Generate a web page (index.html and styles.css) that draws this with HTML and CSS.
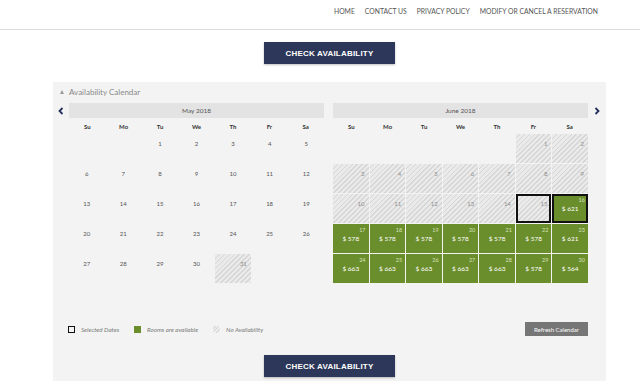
FILE: index.html
```html
<!DOCTYPE html>
<html lang="en">

<head>
    <meta charset="UTF-8">
    <meta name="viewport" content="width=device-width, initial-scale=1.0">
    <title>Availability</title>
    <link rel="stylesheet" href="styles.css">
</head>

<body>
    <header class="topbar">
        <nav class="menu">
            <a href="#">HOME</a>
            <a href="#">CONTACT US</a>
            <a href="#">PRIVACY POLICY</a>
            <a href="#">MODIFY OR CANCEL A RESERVATION</a>
        </nav>
    </header>

    <main class="page">
        <div class="cta cta-top">
            <button class="btn-check">CHECK AVAILABILITY</button>
        </div>

        <section class="calendarBox">
            <h3 class="calTitle"><span class="calIcon"></span>Availability Calendar</h3>

            <div class="months">
                <a href="#" class="arrow">
                    <svg width="6" height="8" viewBox="0 0 6 8"><path d="M4.5 1 L1.5 4 L4.5 7" fill="none" stroke="#25305a" stroke-width="1.8"/></svg>
                </a>

                <div class="month">
                    <div class="monthName">May 2018</div>
                    <div class="dow"><span>Su</span><span>Mo</span><span>Tu</span><span>We</span><span>Th</span><span>Fr</span><span>Sa</span></div>
                    <div class="days">
                        <div class="day"></div>
                        <div class="day"></div>
                        <div class="day">1</div>
                        <div class="day">2</div>
                        <div class="day">3</div>
                        <div class="day">4</div>
                        <div class="day">5</div>
                        <div class="day">6</div>
                        <div class="day">7</div>
                        <div class="day">8</div>
                        <div class="day">9</div>
                        <div class="day">10</div>
                        <div class="day">11</div>
                        <div class="day">12</div>
                        <div class="day">13</div>
                        <div class="day">14</div>
                        <div class="day">15</div>
                        <div class="day">16</div>
                        <div class="day">17</div>
                        <div class="day">18</div>
                        <div class="day">19</div>
                        <div class="day">20</div>
                        <div class="day">21</div>
                        <div class="day">22</div>
                        <div class="day">23</div>
                        <div class="day">24</div>
                        <div class="day">25</div>
                        <div class="day">26</div>
                        <div class="day">27</div>
                        <div class="day">28</div>
                        <div class="day">29</div>
                        <div class="day">30</div>
                        <div class="day full"><span class="num">31</span></div>
                    </div>
                </div>

                <div class="month">
                    <div class="monthName">June 2018</div>
                    <div class="dow"><span>Su</span><span>Mo</span><span>Tu</span><span>We</span><span>Th</span><span>Fr</span><span>Sa</span></div>
                    <div class="days">
                        <div class="day"></div>
                        <div class="day"></div>
                        <div class="day"></div>
                        <div class="day"></div>
                        <div class="day"></div>
                        <div class="day full"><span class="num">1</span></div>
                        <div class="day full"><span class="num">2</span></div>
                        <div class="day full"><span class="num">3</span></div>
                        <div class="day full"><span class="num">4</span></div>
                        <div class="day full"><span class="num">5</span></div>
                        <div class="day full"><span class="num">6</span></div>
                        <div class="day full"><span class="num">7</span></div>
                        <div class="day full"><span class="num">8</span></div>
                        <div class="day full"><span class="num">9</span></div>
                        <div class="day full"><span class="num">10</span></div>
                        <div class="day full"><span class="num">11</span></div>
                        <div class="day full"><span class="num">12</span></div>
                        <div class="day full"><span class="num">13</span></div>
                        <div class="day full"><span class="num">14</span></div>
                        <div class="day full selected"><span class="num">15</span></div>
                        <div class="day open selected"><span class="num">16</span><span class="price">$ 621</span></div>
                        <div class="day open"><span class="num">17</span><span class="price">$ 578</span></div>
                        <div class="day open"><span class="num">18</span><span class="price">$ 578</span></div>
                        <div class="day open"><span class="num">19</span><span class="price">$ 578</span></div>
                        <div class="day open"><span class="num">20</span><span class="price">$ 578</span></div>
                        <div class="day open"><span class="num">21</span><span class="price">$ 578</span></div>
                        <div class="day open"><span class="num">22</span><span class="price">$ 578</span></div>
                        <div class="day open"><span class="num">23</span><span class="price">$ 621</span></div>
                        <div class="day open"><span class="num">24</span><span class="price">$ 663</span></div>
                        <div class="day open"><span class="num">25</span><span class="price">$ 663</span></div>
                        <div class="day open"><span class="num">26</span><span class="price">$ 663</span></div>
                        <div class="day open"><span class="num">27</span><span class="price">$ 663</span></div>
                        <div class="day open"><span class="num">28</span><span class="price">$ 663</span></div>
                        <div class="day open"><span class="num">29</span><span class="price">$ 578</span></div>
                        <div class="day open"><span class="num">30</span><span class="price">$ 564</span></div>
                    </div>
                </div>

                <a href="#" class="arrow">
                    <svg width="6" height="8" viewBox="0 0 6 8"><path d="M1.5 1 L4.5 4 L1.5 7" fill="none" stroke="#25305a" stroke-width="1.8"/></svg>
                </a>
            </div>

            <div class="calFoot">
                <ul class="legend">
                    <li><span class="key key-sel"></span>Selected Dates</li>
                    <li><span class="key key-open"></span>Rooms are available</li>
                    <li><span class="key key-full"></span>No Availability</li>
                </ul>
                <button class="btn-refresh">Refresh Calendar</button>
            </div>

            <div class="cta cta-bottom">
                <button class="btn-check">CHECK AVAILABILITY</button>
            </div>
        </section>
    </main>
</body>

</html>
```

FILE: styles.css
```css
body {
    margin: 0;
    background: #fff;
    font-family: "Lato", "Liberation Sans", sans-serif;
    color: #444;
}

.topbar {
    height: 29px;
    border-bottom: 1px solid #dcdcdc;
    display: flex;
    justify-content: flex-end;
}

.menu {
    display: flex;
    gap: 10px;
    padding: 7px 42px 0 0;
}

.menu a {
    font-size: 6.8px;
    line-height: 8px;
    color: #555;
    text-decoration: none;
}

.page {
    width: 553px;
    margin-left: 53px;
}

.cta {
    display: flex;
    justify-content: center;
}

.cta-top {
    padding: 12px 0 18px;
}

.cta-bottom {
    padding: 18px 0 20px;
}

.btn-check {
    width: 131px;
    height: 22px;
    border: 0;
    background: #2d3759;
    color: #fff;
    font-family: "Liberation Sans", sans-serif;
    font-weight: bold;
    font-size: 8px;
    letter-spacing: 0.2px;
    box-shadow: 0 1px 2px rgba(0, 0, 0, 0.25);
}

.calendarBox {
    background: #f3f3f3;
    padding-top: 5px;
}

.calTitle {
    margin: 0 0 6px;
    padding-left: 7px;
    height: 10px;
    line-height: 10px;
    font-size: 8px;
    font-weight: normal;
    color: #8a8a8a;
    display: flex;
    align-items: center;
}

.calIcon {
    width: 0;
    height: 0;
    border-left: 2.5px solid transparent;
    border-right: 2.5px solid transparent;
    border-bottom: 4px solid #9a9a9a;
    margin-right: 5px;
}

.months {
    display: flex;
    align-items: flex-start;
}

.arrow {
    height: 15px;
    display: flex;
    align-items: center;
    justify-content: center;
    width: 16px;
}

.arrow:last-child {
    width: 18px;
}

.month {
    width: 255px;
}

.month + .month {
    margin-left: 9px;
}

.monthName {
    height: 15px;
    line-height: 15px;
    background: #e3e3e3;
    text-align: center;
    font-size: 6.5px;
    color: #555;
}

.dow {
    display: grid;
    grid-template-columns: repeat(7, 1fr);
    height: 16px;
    padding-top: 5px;
    box-sizing: border-box;
    font-size: 6px;
    line-height: 8px;
    font-weight: bold;
    color: #333;
    text-align: center;
}

.days {
    display: grid;
    grid-template-columns: repeat(7, 1fr);
    grid-auto-rows: 29px;
    gap: 1px;
}

.day {
    font-size: 6px;
    color: #555;
    text-align: center;
    padding-top: 6px;
    box-sizing: border-box;
}

.day.full {
    background: repeating-linear-gradient(-45deg, #d6d6d6 0 1px, #eaeaea 1px 3.5px);
    text-align: right;
    padding: 6px 4px 0 0;
    color: #8d8d8d;
}

.day.open {
    background: #6b8e2c;
    padding: 3px 3px 0 0;
    display: flex;
    flex-direction: column;
}

.day.open .num {
    text-align: right;
    font-size: 5.5px;
    line-height: 6px;
    color: #d6e2bd;
}

.day.open .price {
    text-align: center;
    color: #fff;
    font-size: 6.5px;
    line-height: 8px;
    margin-top: 2px;
    padding-left: 3px;
}

.day.selected {
    box-shadow: inset 0 0 0 2px #111;
}

.calFoot {
    display: flex;
    justify-content: space-between;
    align-items: center;
    margin-top: 38px;
    padding: 0 18px 0 15px;
    height: 16px;
}

.legend {
    list-style: none;
    margin: 0;
    padding: 0;
    display: flex;
    gap: 15px;
}

.legend li {
    display: flex;
    align-items: center;
    gap: 6px;
    font-size: 6.2px;
    font-style: italic;
    color: #7a7a7a;
}

.key {
    width: 7px;
    height: 7px;
    box-sizing: border-box;
}

.key-sel {
    border: 1.5px solid #111;
}

.key-open {
    background: #6b8e2c;
}

.key-full {
    border-radius: 50%;
    background: repeating-linear-gradient(-45deg, #d0d0d0 0 1px, #ececec 1px 2.5px);
}

.btn-refresh {
    width: 63px;
    height: 14px;
    border: 0;
    background: #767676;
    color: #fff;
    font-family: "Lato", "Liberation Sans", sans-serif;
    font-size: 6px;
    padding: 0;
}
```
